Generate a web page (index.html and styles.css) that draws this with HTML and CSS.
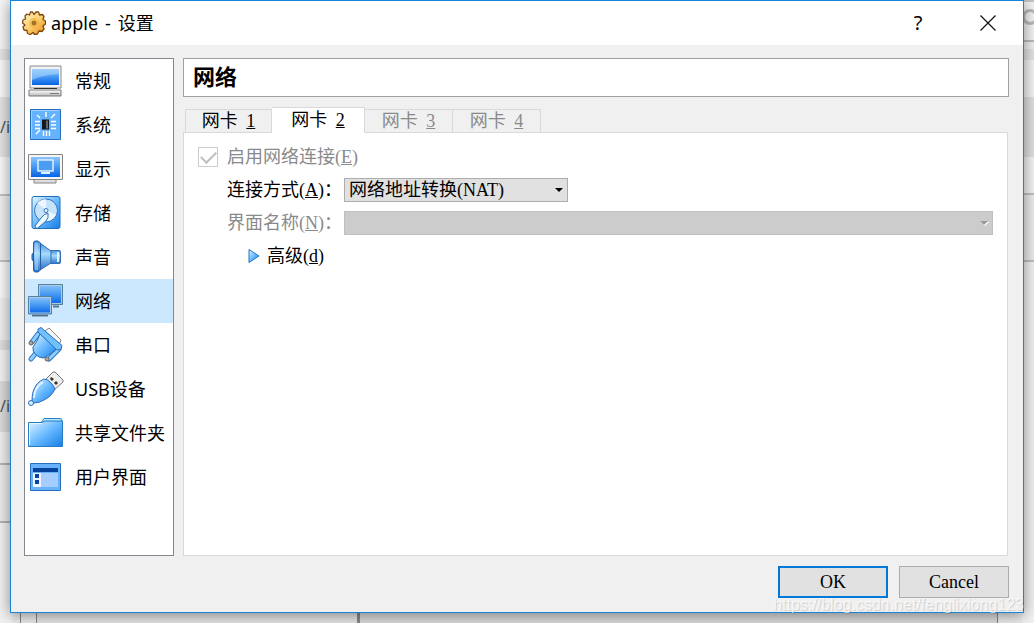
FILE: index.html
```html
<!DOCTYPE html>
<html lang="zh-CN">
<head>
  <meta charset="UTF-8">
  <meta name="viewport" content="width=device-width, initial-scale=1.0">
  <title>apple - 设置</title>
  <link rel="stylesheet" href="styles.css">
</head>
<body>
  <!-- windows behind the dialog -->
  <div class="backdrop" aria-hidden="true">
    <div class="edge edge-left"><span class="peek peek-top">/i</span><span class="peek peek-low">/i</span></div>
    <div class="edge edge-right"><span class="lens"></span></div>
    <div class="edge-bottom"></div>
  </div>

  <main class="dialog">
    <header class="titlebar">
      <svg class="gear" viewBox="0 0 24 24">
        <defs>
          <linearGradient id="gold" x1="0" y1="0" x2="1" y2="1"><stop offset="0" stop-color="#fff6cf"/><stop offset=".5" stop-color="#fbd071"/><stop offset="1" stop-color="#e8860c"/></linearGradient>
        </defs>
        <path d="M8.500 1h2l1.500 2.500L14 1h2.500l1 3 3-.5 1.500 2-1 3 2.500 1.500v3L21 15l1 3-2 2.500-3-.5-1.500 3-3 .5-1.500-2-2.500 2-3-1-.5-3-3-.5-1-3 2-2L.5 12 1 9l2.500-1L3 5l2-2 2.500 1z" fill="url(#gold)" stroke="#80460c" stroke-width="1.3" stroke-linejoin="round"/>
        <circle cx="12" cy="12" r="5" fill="#f3b13c" opacity=".6"/>
        <circle cx="12" cy="12" r="2" fill="#a8742c" stroke="#80561f" stroke-width=".6"/>
      </svg>
      <h1><span>apple</span><span>-</span><span>设置</span></h1>
      <button class="caption" type="button" aria-label="帮助">?</button>
      <button class="caption" type="button" aria-label="关闭">
        <svg width="16" height="16" viewBox="0 0 16 16"><path d="M.5.5l15 15M15.500.5l-15 15" stroke="#111" stroke-width="1.2"/></svg>
      </button>
    </header>

    <div class="content">
      <nav class="sidebar">
        <svg class="defs" width="0" height="0">
          <defs>
            <linearGradient id="screen" x1="0" y1="0" x2="0" y2="1"><stop offset="0" stop-color="#8cc4fb"/><stop offset=".45" stop-color="#4a9df3"/><stop offset="1" stop-color="#0763e6"/></linearGradient>
            <linearGradient id="sky" x1="0" y1="0" x2="1" y2="1"><stop offset="0" stop-color="#e4f6ff"/><stop offset=".5" stop-color="#69baff"/><stop offset="1" stop-color="#167de6"/></linearGradient>
            <linearGradient id="metal" x1="0" y1="0" x2="0" y2="1"><stop offset="0" stop-color="#fff"/><stop offset="1" stop-color="#b9b9b9"/></linearGradient>
            <linearGradient id="cone" x1="0" y1="0" x2="0" y2="1"><stop offset="0" stop-color="#4a8edb"/><stop offset=".4" stop-color="#a5dbfd"/><stop offset="1" stop-color="#2a72cc"/></linearGradient>
          </defs>
        </svg>
        <a class="item" href="#general">
          <svg class="icon" viewBox="0 0 36 36">
            <path d="M2 3h31v22H2z" fill="#f2f2f2" stroke="#8a8a8a"/>
            <path d="M4 6h27v16H4z" fill="url(#screen)"/>
            <path d="M4 6h27v5Q15 12 4 17z" fill="#b8dcff" opacity=".5"/>
            <path d="M6 25.500h23" stroke="#333"/>
            <path d="M1 27h32v6H1z" fill="url(#metal)" stroke="#777"/>
            <path d="M22 30.500h9" stroke="#777"/>
          </svg>常规</a>
        <a class="item" href="#system">
          <svg class="icon" viewBox="0 0 36 36">
            <path d="M2.500 2.500h30v30h-30z" fill="#65b3ff" stroke="#256dbb"/>
            <path d="M3.500 31.500v-28h28" fill="none" stroke="#9bd0ff"/>
            <path d="M7 14.500h5M7 18h5M7 21.500h5M23 14.500h5M23 18h5M23 21.500h5M15.500 24v5M18.500 24v5M21.500 24v5M18 5v5M23 11l4-4M8 27l4-4M9 8l3 3" stroke="#fff" stroke-width="1.4"/>
            <path d="M14 12.500h7v10h-7z" fill="#15191f"/><path d="M18 13.500h2v8h-2z" fill="#63666b"/>
          </svg>系统</a>
        <a class="item" href="#display">
          <svg class="icon" viewBox="0 0 36 36">
            <path d="M6 28h22v4H6z" fill="#ddd" stroke="#858585"/>
            <path d="M.5 3.500h34v25H.5z" fill="#f5f5f5" stroke="#858585"/>
            <path d="M3 6h29v20H3z" fill="url(#screen)"/>
            <path d="M10 9h15v11H10z" fill="#4a9df3" stroke="#dff0ff" stroke-width="1.5"/>
            <path d="M13 22h9" stroke="#dff0ff" stroke-width="2"/>
          </svg>显示</a>
        <a class="item" href="#storage">
          <svg class="icon" viewBox="0 0 36 36">
            <rect x="4" y="1.500" width="28" height="32" rx="2" fill="url(#sky)" stroke="#236fb9"/>
            <circle cx="18" cy="15.500" r="11.500" fill="#c6e3fc" stroke="#2f75bd"/>
            <path d="M18 15L9 8q4-4 9-4zM18 15l10 5q-3 5-9 6z" fill="#fff" opacity=".7"/>
            <circle cx="18" cy="15.500" r="2" fill="#eef8ff" stroke="#2f75bd"/>
            <path d="M20 18q-4 1-7 5l-6 8q1 4 4 1l7-6q3-3 2-8z" fill="#eef8ff" stroke="#2b70b7"/>
          </svg>存储</a>
        <a class="item" href="#audio">
          <svg class="icon" viewBox="0 0 36 36">
            <rect x="4" y="14" width="5" height="8" rx="2" fill="#438bd7" stroke="#205da5"/>
            <path d="M20 11.500h11q1.500 0 1.500 1v11q0 1-1.500 1H20z" fill="url(#cone)" stroke="#326fb4"/>
            <path d="M12 4l11 8v12L12 31z" fill="url(#cone)" stroke="#326fb4"/>
            <path d="M5.500 4q0-2 2-2H10l2.500 2v27L10 33H7.500q-2 0-2-2z" fill="url(#cone)" stroke="#265fa7"/>
            <path d="M7 4h3v27H7z" fill="#c1e5ff" opacity=".45"/>
            <path d="M30 13v10" stroke="#e3f6ff" stroke-width="2"/>
          </svg>声音</a>
        <a class="item active" href="#network" aria-current="page">
          <svg class="icon" viewBox="0 0 36 36">
            <path d="M25 23.500h6" stroke="#52748d" stroke-width="2"/>
            <path d="M10.500 1.500h24v20h-24z" fill="url(#screen)" stroke="#57819f"/>
            <path d="M11.500 20.500v-18h22v18z" fill="none" stroke="#a9cbe4"/>
            <path d="M4 32.500h16" stroke="#52748d" stroke-width="2"/>
            <path d="M.5 13.500h23v17.500H.5z" fill="url(#screen)" stroke="#57819f"/>
            <path d="M1.500 30V14.500h21V30z" fill="none" stroke="#a9cbe4"/>
          </svg>网络</a>
        <a class="item" href="#serial">
          <svg class="icon" viewBox="0 0 36 36">
            <path d="M17 4l4-3 12 12-2 5z" fill="#f6f6f6" stroke="#858585"/>
            <path d="M10 7l-6 8M31 22l-10 10M8 26l-5 6" stroke="#276fbd" stroke-width="5" stroke-linecap="round"/>
            <path d="M10 7l-6 8M31 22l-10 10M8 26l-5 6" stroke="#8dd0ff" stroke-width="3" stroke-linecap="round"/>
            <path d="M12 7l17 15-7 5-6 4q-5 0-8-3-4-4-3-8l4-6z" fill="url(#sky)" stroke="#276fbd"/>
            <path d="M10 2l3-1.500 21 18-1 4-4 .5L10 5z" fill="#72c0fc" stroke="#276fbd"/>
            <circle cx="3" cy="16" r="2" fill="#aaa" stroke="#666"/><circle cx="19" cy="32" r="2" fill="#aaa" stroke="#666"/>
          </svg>串口</a>
        <a class="item" href="#usb">
          <svg class="icon" viewBox="0 0 36 36">
            <path d="M17 9l8-8h2l8 8v2l-9 8z" fill="#eee" stroke="#777"/>
            <path d="M23 6l3 2-2 2-2-2zM28 10l2 2-2 2-2-2z" fill="#333"/>
            <path d="M16 8q4 0 7 4 3 3 4 6-3 7-11 11-5 3-10 3l-2-2q0-5 1-9 3-10 11-13z" fill="url(#sky)" stroke="#276fbd"/>
            <path d="M15 11q-6 4-8 10-1 3-1 6" fill="none" stroke="#fff" stroke-width="2" opacity=".75"/>
            <circle cx="3" cy="32" r="2.500" fill="#d5efff" stroke="#276fbd"/>
          </svg>USB设备</a>
        <a class="item" href="#shared">
          <svg class="icon" viewBox="0 0 36 36">
            <path d="M13 8l3-4.500h16q2 0 2 2V10H13z" fill="#b8e8ff" stroke="#2783bd"/>
            <path d="M.5 7.500H14L17 6h17.500v25.500H.5z" fill="url(#sky)" stroke="#277bc0"/>
            <path d="M1.500 30V8.500H14" fill="none" stroke="#dff6ff"/>
          </svg>共享文件夹</a>
        <a class="item" href="#interface">
          <svg class="icon" viewBox="0 0 36 36">
            <path d="M2.500 4.500h30v27h-30z" fill="#67b2fb" stroke="#276fbd"/>
            <path d="M5 9h25v4H5z" fill="#07429d"/><path d="M5 14h25v14H5z" fill="#a5cdff"/><path d="M5 14h8v14H5z" fill="#f0f6ff"/>
            <path d="M7 15h4v4H7zM7 21h4v4H7z" fill="#07429d"/>
          </svg>用户界面</a>
      </nav>

      <section class="settings">
        <h2>网络</h2>
        <div class="tabs" role="tablist">
          <button class="tab" type="button" role="tab">网卡 <u>1</u></button>
          <button class="tab selected" type="button" role="tab" aria-selected="true">网卡 <u>2</u></button>
          <button class="tab" type="button" role="tab" disabled>网卡 <u>3</u></button>
          <button class="tab" type="button" role="tab" disabled>网卡 <u>4</u></button>
        </div>
        <form class="panel">
          <input class="check" type="checkbox" id="enable" checked disabled>
          <label class="wide muted" for="enable">启用网络连接(<u>E</u>)</label>

          <label class="name" for="attach">连接方式(<u>A</u>)：</label>
          <div class="combo short">
            <select id="attach"><option>网络地址转换(NAT)</option></select>
          </div>

          <label class="name muted" for="adapter">界面名称(<u>N</u>)：</label>
          <div class="combo off">
            <select id="adapter" disabled><option></option></select>
          </div>

          <button class="advanced" type="button">
            <svg width="12" height="16" viewBox="0 0 12 16"><path d="M1 1.500v13l10-6.500z" fill="url(#sky)" stroke="#2377bd"/></svg>
            <span>高级(<u>d</u>)</span>
          </button>
        </form>
      </section>
    </div>

    <footer class="actions">
      <button class="btn primary" type="button">OK</button>
      <button class="btn" type="button">Cancel</button>
    </footer>
  </main>
  <div class="watermark">https://blog.csdn.net/fenglixiong123</div>
</body>
</html>
```

FILE: styles.css
```css
* { box-sizing: border-box; }
body { margin: 0; min-height: 100vh; display: flex; position: relative; overflow: hidden; background: #ececec; color: #000; font: 18px/24px "Liberation Serif", "Noto Sans CJK SC", serif; }
button, select { font: inherit; color: inherit; }

/* behind the dialog */
.backdrop { position: absolute; inset: 0; }
.edge { position: absolute; top: 0; bottom: 0; width: 12px; overflow: hidden; }
.edge-left { left: 0; background: linear-gradient(#f7f7f7 49px, #e6e6e6 49px 60px, #fafafa 60px 97px, #e4e4e4 97px 157px, #fafafa 157px 194px, #c4c4c4 194px 196px, #f0f0f0 196px 260px, #c4c4c4 260px 262px, #fafafa 262px 298px, #f0f0f0 298px 340px, #e0e0e0 340px 350px, #f4f4f4 350px 381px, #dcdcdc 381px 432px, #f0f0f0 432px 463px, #b4b4b4 463px 465px, #ececec 465px 521px, #b4b4b4 521px 523px, #f2f2f2 523px); }
.edge-right { right: 0; background: linear-gradient(#c4c4c4 2px, #f4f4f4 2px 40px, #bcbcbc 40px 42px, #f0f0f0 42px 49px, #e4e4e4 49px 60px, #f4f4f4 60px 97px, #e0e0e0 97px 157px, #f4f4f4 157px 193px, #c0c0c0 193px 195px, #ececec 195px 260px, #c0c0c0 260px 262px, #f2f2f2 262px); }
.edge-bottom { position: absolute; left: 20px; right: 36px; bottom: 0; height: 12px; border: solid #858585; border-width: 0 1px; background: linear-gradient(90deg, #ececec 15px, #858585 15px 16px, #e6e6e6 16px 336px, #888 336px 339px, #dcdcdc 339px); }
.peek { position: absolute; left: 0; font: 16px/24px "Noto Sans", sans-serif; color: #555; }
.peek-top { top: 115px; }
.peek-low { top: 394px; }
.lens { position: absolute; left: 0; top: 9px; width: 16px; height: 16px; border: 3px solid #bbb; border-radius: 50%; }

.dialog { flex: 1; display: flex; flex-direction: column; position: relative; margin: 0 10px 10px; background: #f0f0f0; border: 1px solid #1883d7; box-shadow: 0 2px 14px rgba(0,0,0,0.45); }

.titlebar { display: flex; align-items: center; height: 44px; padding-left: 11px; background: #fff; }
.gear { width: 24px; height: 24px; margin-right: 5px; }
h1 { flex: 1; display: flex; gap: 7px; margin: 0; font: 18px/24px "Noto Sans", "Noto Sans CJK SC", sans-serif; }
.caption { display: flex; align-items: center; justify-content: center; width: 70px; height: 44px; padding: 0; border: 0; background: none; font: 20px/24px "Noto Sans", sans-serif; }

.content { flex: 1; display: flex; gap: 9px; padding: 13px 14px 0 13px; }
.sidebar { width: 150px; background: #fff; border: 1px solid #828790; font-family: "Noto Sans", "Noto Sans CJK SC", sans-serif; }
.defs { position: absolute; }
.item { display: flex; align-items: center; gap: 11px; height: 44px; padding-left: 3px; color: #000; text-decoration: none; white-space: nowrap; }
.item.active { background: #cce8ff; }
.icon { flex: none; width: 36px; height: 36px; overflow: visible; }

.settings { flex: 1; display: flex; flex-direction: column; }
h2 { margin: 0 0 10px; padding: 0 9px; background: #fff; border: 1px solid #a0a0a0; font-size: 22px; line-height: 37px; }
.tabs { display: flex; align-items: flex-end; height: 26px; padding-left: 2px; margin-bottom: -1px; position: relative; }
.tab { width: 88px; height: 24px; padding: 0; background: #f0f0f0; border: 1px solid #d9d9d9; border-left-width: 0; line-height: 22px; }
.tab u { margin-left: 4px; }
.tab:first-child { width: 87px; border-left-width: 1px; }
.tab.selected { width: 93px; height: 26px; background: #fff; border-bottom-color: #fff; }
.tab:disabled, .muted { color: #8a8a8a; }
.panel { flex: 1; display: grid; grid-template-columns: 29px 117px 1fr; grid-auto-rows: 24px; align-content: start; gap: 9px 0; margin-right: 1px; padding: 12px 14px; background: #fff; border: 1px solid #d9d9d9; }
.check { appearance: none; display: grid; place-items: center; align-self: center; width: 20px; height: 20px; margin: 0; border: 1px solid #ccc; background: #fff; }
.check:checked::before { content: ""; width: 13px; height: 7px; border: solid #bfbfbf; border-width: 0 0 2px 2px; transform: translateY(-2px) rotate(-45deg); }
.wide { grid-column: 2 / 4; }
.name { grid-column: 2; white-space: nowrap; }
.combo { position: relative; }
.combo.short { width: 224px; }
.combo select { appearance: none; display: block; width: 100%; height: 24px; padding: 0 4px; background: #e1e1e1; border: 1px solid #adadad; border-radius: 0; line-height: 22px; }
.combo::after { content: ""; position: absolute; right: 5px; top: 10px; border: solid transparent; border-width: 4px 4px 0; border-top-color: #000; }
.combo.off select { background: #ccc; border-color: #bfbfbf; opacity: 1; }
.combo.off::after { border-top-color: #999; filter: drop-shadow(1px 1px 0 #fff); }
.advanced { grid-column: 2 / 4; justify-self: start; display: flex; align-items: center; gap: 7px; margin-left: 21px; padding: 0; border: 0; background: none; }

.actions { display: flex; justify-content: flex-end; gap: 11px; padding: 10px 14px 14px; }
.btn { width: 110px; height: 32px; padding: 0; background: #e1e1e1; border: 1px solid #adadad; }
.btn.primary { border: 2px solid #0078d7; }

.watermark { position: absolute; right: 10px; bottom: 8px; font: 16px/20px "Liberation Sans", sans-serif; color: rgba(255,255,255,0.7); text-shadow: 1px 1px 1px rgba(0,0,0,0.15); pointer-events: none; }
```
